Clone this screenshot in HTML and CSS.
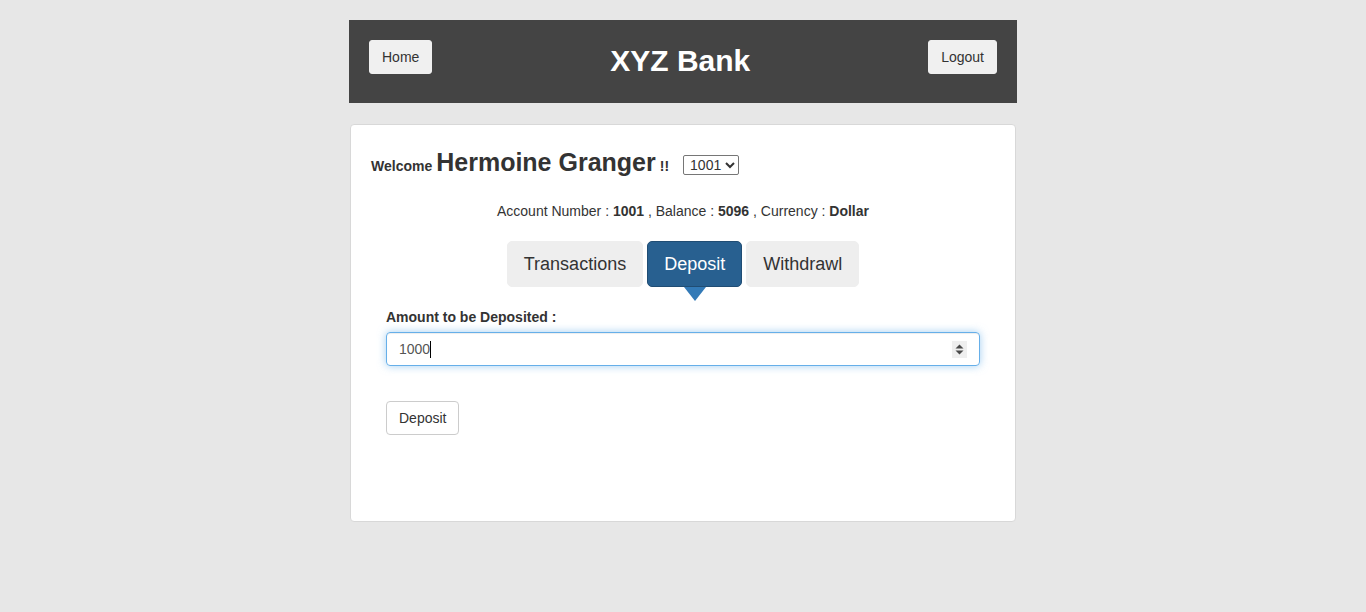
FILE: index.html
```html
<!DOCTYPE html>
<html>
<head>
<meta charset="utf-8">
<link rel="stylesheet" href="styles.css">
</head>
<body>
<div class="page">
  <header class="topbar">
    <button class="btn btn-light">Home</button>
    <h1 class="brand">XYZ Bank</h1>
    <button class="btn btn-light">Logout</button>
  </header>
  <main class="card">
    <div class="welcome">
      <span class="w-small">Welcome</span>
      <span class="w-name">Hermoine Granger</span>
      <span class="w-small">!!</span>
      <select class="acct"><option>1001</option></select>
    </div>
    <div class="info">Account Number : <strong>1001</strong> , Balance : <strong>5096</strong> , Currency : <strong>Dollar</strong></div>
    <div class="tabs">
      <button class="tab">Transactions</button>
      <button class="tab active">Deposit</button>
      <button class="tab">Withdrawl</button>
    </div>
    <form class="form">
      <label class="lbl">Amount to be Deposited :</label>
      <div class="field">
        <span class="val">1000</span><span class="caret"></span>
        <span class="spin">
          <svg width="15" height="17" viewBox="0 0 15 17"><rect width="15" height="17" fill="#efefef"/><path d="M7.5 3.5 L11.5 7.5 H3.5 Z" fill="#4a4a4a"/><path d="M7.5 13.5 L11.5 9.5 H3.5 Z" fill="#4a4a4a"/></svg>
        </span>
      </div>
      <button type="button" class="btn btn-default">Deposit</button>
    </form>
  </main>
</div>
</body>
</html>
```
FILE: styles.css
```css
* { box-sizing: border-box; }
html, body { margin: 0; padding: 0; }
body {
  background: #e7e7e7;
  font-family: "Liberation Sans", Arial, sans-serif;
  font-size: 14px;
  color: #333;
  height: 612px;
}
.page {
  width: 668px;
  margin: 20px auto 0;
}
.topbar {
  background: #444444;
  height: 83px;
  display: flex;
  align-items: flex-start;
  justify-content: space-between;
  padding: 20px 20px 0;
}
.brand {
  margin: 0;
  color: #fff;
  font-size: 30px;
  font-weight: bold;
  line-height: 42px;
}
.btn {
  font-family: inherit;
  font-size: 14px;
  line-height: 20px;
  padding: 6px 12px;
  border-radius: 3px;
  color: #333;
  cursor: pointer;
}
.btn-light {
  background: #f0f0f0;
  border: 1px solid #f0f0f0;
  height: 34px;
}
.card {
  margin: 21px 1px 0;
  background: #fff;
  border: 1px solid #d8d8d8;
  border-radius: 4px;
  height: 398px;
  padding: 23px 20px 0;
}
.welcome {
  display: flex;
  align-items: baseline;
  height: 32px;
}
.w-small {
  font-size: 14px;
  font-weight: bold;
}
.w-name {
  font-size: 25px;
  font-weight: bold;
  margin: 0 4px;
}
.acct {
  margin-left: 14px;
  font-family: inherit;
  font-size: 14px;
  height: 20px;
  width: 56px;
  padding: 0 0 0 2px;
  border: 1px solid #767676;
  border-radius: 2px;
  background: #fff;
  color: #333;
  position: relative;
  top: -1px;
}
.info {
  text-align: center;
  margin-top: 21px;
  line-height: 20px;
}
.tabs {
  display: flex;
  justify-content: center;
  gap: 4px;
  margin-top: 20px;
}
.tab {
  font-family: inherit;
  font-size: 18px;
  line-height: 23px;
  padding: 11px 16px 10px;
  border: 1px solid #eeeeee;
  background: #eeeeee;
  color: #333;
  border-radius: 5px;
  position: relative;
}
.tab.active {
  background: #286090;
  border-color: #204d74;
  color: #fff;
}
.tab.active::after {
  content: "";
  position: absolute;
  left: 50%;
  margin-left: -11px;
  bottom: -15px;
  border-left: 11px solid transparent;
  border-right: 11px solid transparent;
  border-top: 14px solid #337ab7;
}
.form {
  margin: 20px 15px 0;
  display: flex;
  flex-direction: column;
  align-items: flex-start;
}
.lbl {
  font-weight: bold;
  line-height: 20px;
  margin-bottom: 5px;
}
.field {
  width: 100%;
  height: 34px;
  border: 1px solid #66afe9;
  border-radius: 4px;
  box-shadow: inset 0 1px 1px rgba(0,0,0,.075), 0 0 8px rgba(102,175,233,.6);
  padding: 6px 12px;
  display: flex;
  align-items: center;
  position: relative;
  color: #555;
}
.caret {
  display: inline-block;
  width: 1px;
  height: 17px;
  background: #000;
}
.spin {
  position: absolute;
  right: 12px;
  top: 8px;
  line-height: 0;
}
.btn-default {
  margin-top: 35px;
  background: #fff;
  border: 1px solid #ccc;
  border-radius: 4px;
  height: 34px;
}
```
